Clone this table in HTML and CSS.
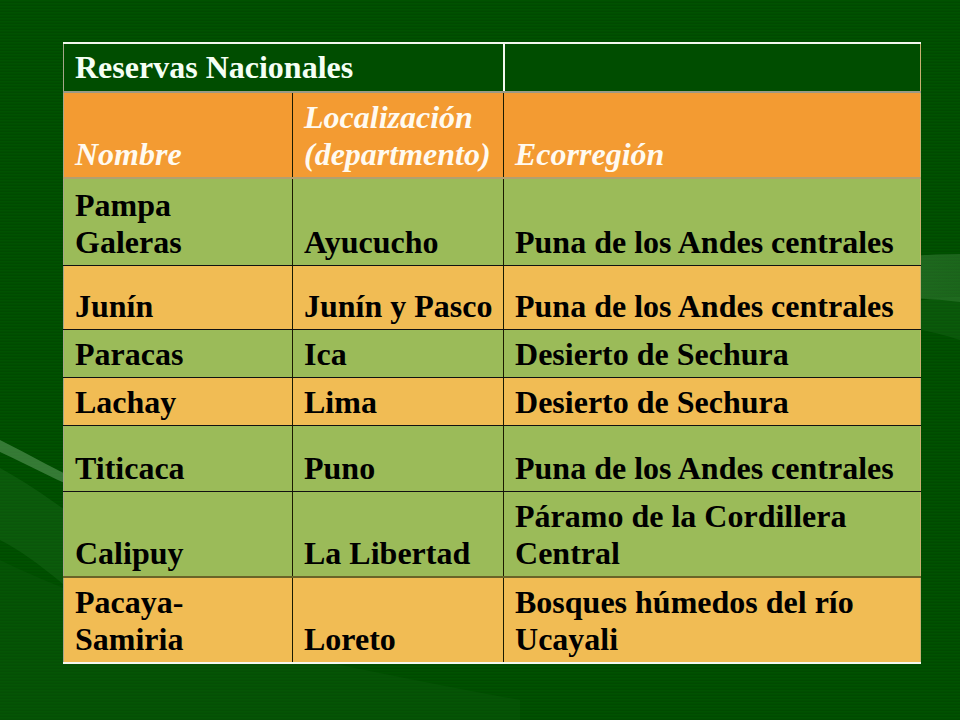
FILE: index.html
```html
<!DOCTYPE html>
<html lang="es">
<head>
<meta charset="utf-8">
<title>Reservas Nacionales</title>
<link rel="stylesheet" href="styles.css">
</head>
<body>
<div class="slide">
  <svg class="backdrop" width="960" height="720" viewBox="0 0 960 720" aria-hidden="true">
    <defs>
      <pattern id="stripes" width="4" height="3" patternUnits="userSpaceOnUse">
        <rect width="4" height="3" fill="#004a00"/>
        <rect y="0" width="4" height="1.5" fill="#005200"/>
      </pattern>
      <linearGradient id="swR" x1="0" y1="0" x2="1" y2="0">
        <stop offset="0" stop-color="#5a9a5a" stop-opacity="0"/>
        <stop offset="0.5" stop-color="#5a9a5a" stop-opacity="0.4"/>
        <stop offset="1" stop-color="#5a9a5a" stop-opacity="0.3"/>
      </linearGradient>
    </defs>
    <rect width="960" height="720" fill="url(#stripes)"/>
    <path d="M700 302 C 780 272, 880 254, 960 254 L 960 302 C 880 292, 790 302, 700 302 Z" fill="url(#swR)"/>
    <path d="M860 322 C 900 302, 930 297, 960 297 L 960 340 C 930 330, 900 325, 860 322 Z" fill="#2f7a2f" opacity="0.22"/>
    <path d="M0 440 C 30 455, 60 472, 90 486 L 90 494 C 60 482, 30 466, 0 452 Z" fill="#6aa66a" opacity="0.5"/>
    <path d="M0 468 C 40 490, 80 520, 130 560 L 130 640 C 80 600, 40 560, 0 540 Z" fill="#2a7a2a" opacity="0.25"/>
    <path d="M0 560 C 120 620, 300 660, 520 700 L 520 720 L 0 720 Z" fill="#1e6a1e" opacity="0.16"/>
  </svg>

  <table class="grid">
    <colgroup>
      <col class="c1">
      <col class="c2">
      <col class="c3">
    </colgroup>
    <tr class="r-title">
      <td colspan="2" class="title-cell">Reservas Nacionales</td>
      <td class="title-empty"></td>
    </tr>
    <tr class="r-head">
      <th>Nombre</th>
      <th>Localización<br>(departmento)</th>
      <th>Ecorregión</th>
    </tr>
    <tr class="green h87">
      <td>Pampa<br>Galeras</td>
      <td>Ayucucho</td>
      <td>Puna de los Andes centrales</td>
    </tr>
    <tr class="amber h64">
      <td>Junín</td>
      <td>Junín y Pasco</td>
      <td>Puna de los Andes centrales</td>
    </tr>
    <tr class="green h48">
      <td>Paracas</td>
      <td>Ica</td>
      <td>Desierto de Sechura</td>
    </tr>
    <tr class="amber h48">
      <td>Lachay</td>
      <td>Lima</td>
      <td>Desierto de Sechura</td>
    </tr>
    <tr class="green h66">
      <td>Titicaca</td>
      <td>Puno</td>
      <td>Puna de los Andes centrales</td>
    </tr>
    <tr class="green h86 before-last">
      <td>Calipuy</td>
      <td>La Libertad</td>
      <td>Páramo de la Cordillera<br>Central</td>
    </tr>
    <tr class="amber h86 last">
      <td>Pacaya-<br>Samiria</td>
      <td>Loreto</td>
      <td>Bosques húmedos del río<br>Ucayali</td>
    </tr>
  </table>
</div>
</body>
</html>
```

FILE: styles.css
```css
html, body {
  margin: 0;
  padding: 0;
  background: #004b00;
}

.slide {
  position: relative;
  width: 960px;
  height: 720px;
  overflow: hidden;
  padding: 42px 0 0 63px;
  box-sizing: border-box;
}

.backdrop {
  position: absolute;
  left: 0;
  top: 0;
  z-index: 0;
}

.grid {
  position: relative;
  z-index: 1;
  border-collapse: collapse;
  table-layout: fixed;
  width: 857px;
  font-family: "Liberation Serif", "Times New Roman", serif;
  font-weight: bold;
  font-size: 32px;
  line-height: 37px;
  color: #000;
}

.c1 { width: 229px; }
.c2 { width: 211px; }
.c3 { width: 417px; }

.grid td,
.grid th {
  vertical-align: bottom;
  text-align: left;
  padding: 0 8px 4px 11px;
  border-left: 1px solid #1a1a00;
  border-right: 1px solid #1a1a00;
  border-bottom: 1px solid #111;
  white-space: nowrap;
  box-sizing: border-box;
}

.grid tr td:first-child,
.grid tr th:first-child {
  border-left: 1px solid #a6a68a;
}
.grid tr td:last-child,
.grid tr th:last-child {
  border-right: 1px solid #c9b070;
}

.r-title { height: 49px; }
.r-title td {
  background: #004d00;
  color: #f4fff4;
  border-top: 2px solid #f2f8ee;
  border-bottom: 2px solid #9a9a86;
  padding-bottom: 5px;
}
.r-title td.title-cell {
  border-left: 2px solid #f2f8ee;
  border-right: 2px solid #f2f8ee;
}
.r-title td.title-empty {
  border-left: 2px solid #f2f8ee;
  border-right: 2px solid #f2f8ee;
}

.r-head { height: 86px; }
.r-head th {
  background: #f39b32;
  color: #fffaf0;
  font-style: italic;
  font-weight: bold;
  border-bottom: 2px solid #b2a070;
  padding-bottom: 4px;
}

.green td { background: #9bbb59; }
.amber td { background: #f1bc54; }

.h87 { height: 87px; }
.h86 { height: 86px; }
.h66 { height: 66px; }
.h64 { height: 64px; }
.h48 { height: 48px; }

.green td, .amber td { padding-bottom: 4px; }

.before-last td {
  border-bottom: 2px solid #6a6428;
}

.last td {
  border-bottom: 2px solid #f4f8f0;
  padding-bottom: 4px;
}
```
